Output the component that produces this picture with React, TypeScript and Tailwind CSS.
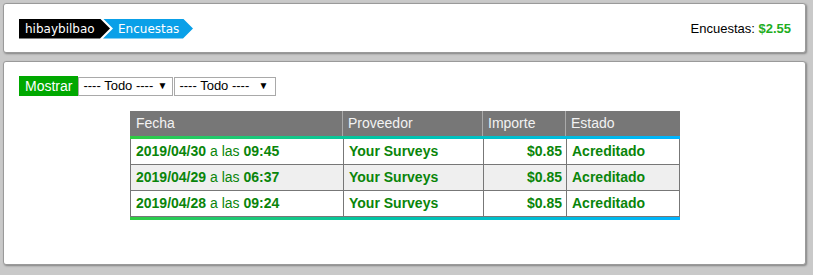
import React from 'react';

interface Row {
  date: string;
  time: string;
  provider: string;
  amount: string;
  status: string;
}

const rows: Row[] = [
  { date: '2019/04/30', time: '09:45', provider: 'Your Surveys', amount: '$0.85', status: 'Acreditado' },
  { date: '2019/04/29', time: '06:37', provider: 'Your Surveys', amount: '$0.85', status: 'Acreditado' },
  { date: '2019/04/28', time: '09:24', provider: 'Your Surveys', amount: '$0.85', status: 'Acreditado' },
];

const cols = 'grid grid-cols-[212px_140px_83px_115px]';

// drawn instead of a native <select> so the box looks the same everywhere
const FakeSelect: React.FC<{ width: string; padRight: string }> = ({ width, padRight }) => (
  <div className={`${width} ${padRight} h-[19px] border border-[#a9a9a9] bg-white flex items-center justify-between pl-[4px] text-[13px] text-black whitespace-nowrap`}>
    <span>---- Todo ----</span>
    <span className="text-[10px] leading-none">▼</span>
  </div>
);

const App: React.FC = () => {
  return (
    <div className="w-[813px] h-[275px] bg-[#c9c9c9] pt-[3px] pl-[3px] font-['Liberation_Sans',Arial,sans-serif]">
      {/* top bar */}
      <div className="w-[803px] h-[50px] bg-white border border-[#9a9a9a] rounded-[3px] shadow-[1px_1px_2px_rgba(0,0,0,0.35)] flex items-center justify-between pl-[15px] pr-[14px]">
        <div className="flex items-center font-['DejaVu_Sans',Verdana,sans-serif] text-[12px] text-white mt-[1px]">
          <div className="w-[91px] h-[20px] bg-black pl-[6px] flex items-center [clip-path:polygon(0_0,calc(100%_-_10px)_0,100%_50%,calc(100%_-_10px)_100%,0_100%)]">
            hibaybilbao
          </div>
          <div className="-ml-[7px] w-[90px] h-[20px] bg-[#0aa0e8] pl-[15px] flex items-center [clip-path:polygon(0_0,calc(100%_-_10px)_0,100%_50%,calc(100%_-_10px)_100%,0_100%,10px_50%)]">
            Encuestas
          </div>
        </div>
        <div className="text-[13px] text-black mt-[2px]">
          Encuestas: <span className="font-bold text-[#1fae1f]">$2.55</span>
        </div>
      </div>

      {/* main panel */}
      <div className="mt-[8px] w-[803px] h-[204px] bg-white border border-[#9a9a9a] rounded-[3px] shadow-[1px_1px_2px_rgba(0,0,0,0.35)] pt-[14px] pl-[15px]">
        <div className="flex items-center">
          <div className="h-[20px] bg-[#00a800] text-white text-[14px] px-[6px] flex items-center">Mostrar</div>
          <FakeSelect width="w-[95px]" padRight="pr-[5px]" />
          <div className="w-[1px]" />
          <FakeSelect width="w-[102px]" padRight="pr-[7px]" />
        </div>

        <div className="mt-[15px] ml-[111px] w-[550px] text-[14px]">
          <div className={`${cols} h-[25px] bg-[#777777] text-[#f2f2f2]`}>
            <div className="pl-[6px] flex items-center">Fecha</div>
            <div className="pl-[5px] flex items-center border-l border-[#aaaaaa]">Proveedor</div>
            <div className="pl-[5px] flex items-center border-l border-[#aaaaaa]">Importe</div>
            <div className="pl-[5px] flex items-center border-l border-[#aaaaaa]">Estado</div>
          </div>
          <div className="h-[3px] bg-gradient-to-r from-[#2ecc40] to-[#00b4ff]" />
          {rows.map((r, i) => (
            <div
              key={r.date}
              className={`${cols} h-[26px] border-x border-b border-[#777777] text-[#0a850a] font-bold ${i % 2 === 1 ? 'bg-[#efefef]' : 'bg-white'}`}
            >
              <div className="pl-[5px] flex items-center">
                {r.date}<span className="font-normal">&nbsp;a las&nbsp;</span>{r.time}
              </div>
              <div className="pl-[5px] flex items-center border-l border-[#777777]">{r.provider}</div>
              <div className="pr-[4px] flex items-center justify-end border-l border-[#777777]">{r.amount}</div>
              <div className="pl-[5px] flex items-center border-l border-[#777777]">{r.status}</div>
            </div>
          ))}
          <div className="h-[3px] bg-gradient-to-r from-[#2ecc40] to-[#00b4ff]" />
        </div>
      </div>
    </div>
  );
};

export default App;
